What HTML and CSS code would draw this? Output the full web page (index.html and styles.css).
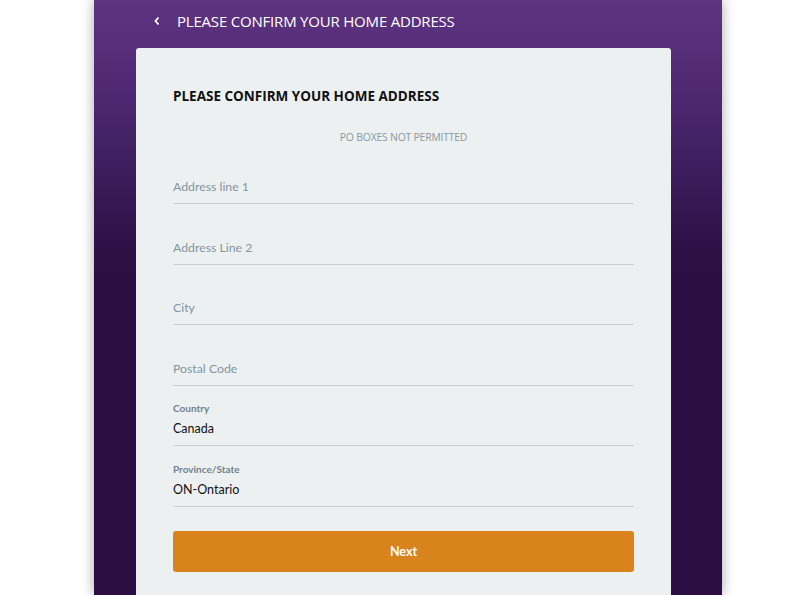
FILE: index.html
```html
<!DOCTYPE html>
<html>
<head>
<meta charset="utf-8">
<link rel="stylesheet" href="styles.css">
</head>
<body>
<div class="panel">
  <header class="topbar">
    <svg class="back" width="8" height="10" viewBox="0 0 8 10"><path d="M5.5 1.5 L2.5 5 L5.5 8.5" fill="none" stroke="#fff" stroke-width="1.8"/></svg>
    <span class="top-title">PLEASE CONFIRM YOUR HOME ADDRESS</span>
  </header>
  <div class="card">
    <h1 class="card-title">PLEASE CONFIRM YOUR HOME ADDRESS</h1>
    <p class="note">PO BOXES NOT PERMITTED</p>
    <div class="field first"><span class="ph">Address line 1</span></div>
    <div class="field"><span class="ph">Address Line 2</span></div>
    <div class="field"><span class="ph">City</span></div>
    <div class="field"><span class="ph">Postal Code</span></div>
    <div class="field"><span class="lbl">Country</span><span class="val">Canada</span></div>
    <div class="field"><span class="lbl">Province/State</span><span class="val">ON-Ontario</span></div>
    <button class="next">Next</button>
  </div>
</div>
</body>
</html>
```
FILE: styles.css
```css
html, body { margin: 0; padding: 0; background: #fff; }
body { font-family: "Lato", "Open Sans", sans-serif; height: 595px; overflow: hidden; }
.panel {
  margin-left: 94px;
  width: 628px;
  height: 595px;
  background: linear-gradient(to bottom, #5f3481 0px, #4b266e 110px, #2e1045 250px, #2c0e42 280px, #2c0e42 100%);
  box-shadow: 0 0 12px rgba(0,0,0,0.35);
}
.topbar {
  height: 48px;
  display: flex;
  align-items: center;
  padding-left: 59px;
  box-sizing: border-box;
  padding-bottom: 6px;
}
.back { margin-right: 16px; }
.top-title {
  color: #fff;
  font-family: "Open Sans", sans-serif;
  font-size: 15px;
  letter-spacing: -0.2px;
}
.card {
  margin-left: 42px;
  width: 535px;
  box-sizing: border-box;
  background: #edf0f1;
  border-radius: 3px 3px 0 0;
  padding: 39px 37px 40px;
  height: 547px;
}
.card-title {
  margin: 0;
  font-family: "Open Sans", sans-serif;
  font-weight: 700;
  font-size: 13.5px;
  color: #111;
  line-height: 18px;
  letter-spacing: 0;
}
.note {
  margin: 25px 0 0;
  text-align: center;
  font-family: "Open Sans", sans-serif;
  font-size: 10.4px;
  color: #8a9aa3;
  line-height: 14px;
  letter-spacing: -0.2px;
}
.field {
  height: 60.5px;
  box-sizing: border-box;
  border-bottom: 1px solid #c8d0d4;
  display: flex;
  flex-direction: column;
  justify-content: flex-end;
  padding-bottom: 8px;
}
.field.first { height: 60px; }
.ph { font-size: 12.3px; color: #82959f; line-height: 16px; }
.lbl { font-size: 10px; font-weight: 700; color: #6f8290; line-height: 12px; margin-bottom: 7px; }
.val { font-size: 12.5px; color: #111; line-height: 16px; }
.next {
  display: block;
  width: 100%;
  height: 41px;
  margin-top: 24px;
  border: 0;
  border-radius: 3px;
  background: #d9831c;
  color: #fff;
  font-family: "Lato", sans-serif;
  font-weight: 700;
  font-size: 12.5px;
}
```
